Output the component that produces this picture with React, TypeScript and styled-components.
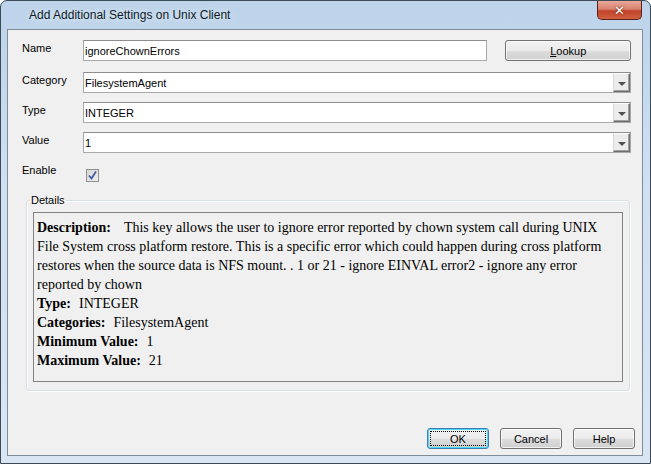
import { createGlobalStyle } from "styled-components";
import styled from "styled-components";

const Global = createGlobalStyle`
  html, body {
    margin: 0;
    padding: 0;
    width: 651px;
    height: 464px;
    overflow: hidden;
    background: #fff;
  }
  * { box-sizing: border-box; }
`;

const Window = styled.div`
  width: 651px;
  height: 464px;
  display: flex;
  flex-direction: column;
  border: 1px solid #3c4a58;
  border-radius: 7px 7px 0 0;
  background: linear-gradient(180deg, #bcd3ea 0%, #cfe0f2 40%, #d8e6f4 100%);
  font-family: "Liberation Sans", Arial, sans-serif;
  position: relative;
`;

const TitleBar = styled.div`
  height: 28px;
  display: flex;
  align-items: center;
  padding-left: 28px;
  font-family: "Liberation Sans", Arial, sans-serif;
  font-size: 12px;
  color: #0e1a26;
  text-shadow: 0 0 6px rgba(255, 255, 255, 0.9);
`;

const CloseButton = styled.div`
  position: absolute;
  top: 0;
  right: 8px;
  width: 45px;
  height: 19px;
  border: 1px solid #5b2118;
  border-top: none;
  border-radius: 0 0 5px 5px;
  background: linear-gradient(180deg, #e9a99a 0%, #d8826f 45%, #c0432a 55%, #d0603f 100%);
  display: flex;
  align-items: center;
  justify-content: center;
  color: #fff;
  font-family: "DejaVu Sans", sans-serif;
  font-weight: bold;
  font-size: 13px;
  text-shadow: 0 0 2px #4a120c;
`;

const Client = styled.div`
  flex: 1;
  margin: 0 7px 7px 6px;
  border: 1px solid #7f8d9b;
  background: #f0f0f0;
  display: flex;
  flex-direction: column;
  padding: 10px 11px 6px 14px;
  font-size: 11px;
  color: #000;
`;

const Row = styled.div<{ $mb: number }>`
  display: flex;
  align-items: center;
  height: 21px;
  margin-bottom: ${(p) => p.$mb}px;
`;

const Label = styled.div`
  width: 61px;
  flex-shrink: 0;
  padding-bottom: 5px;
  font-size: 11px;
`;

const TextInput = styled.div`
  width: 406px;
  height: 21px;
  border: 1px solid #a9a9a9;
  border-top-color: #8e8e8e;
  background: #fff;
  display: flex;
  align-items: center;
  padding-left: 1px;
  font-size: 11px;
`;

const LookupButton = styled.div`
  margin-left: 18px;
  width: 126px;
  height: 21px;
  border: 1px solid #707070;
  border-radius: 3px;
  background: linear-gradient(180deg, #f2f2f2 0%, #ebebeb 50%, #dddddd 51%, #cfcfcf 100%);
  display: flex;
  align-items: center;
  justify-content: center;
  font-size: 11px;
  box-shadow: inset 0 0 0 1px rgba(255, 255, 255, 0.7);
  u { text-decoration: underline; }
`;

const Combo = styled.div`
  width: 549px;
  height: 21px;
  border: 1px solid #a9a9a9;
  border-top-color: #8e8e8e;
  background: #fff;
  display: flex;
  align-items: center;
  justify-content: space-between;
  padding-left: 1px;
  font-size: 11px;
`;

const ComboArrow = styled.div`
  width: 17px;
  height: 19px;
  background: #ececec;
  border-left: 1px solid #d8d8d8;
  border-top: 1px solid #fff;
  border-right: 1px solid #6e6e6e;
  border-bottom: 1px solid #6e6e6e;
  box-shadow: inset -1px -1px 0 #a0a0a0;
  display: flex;
  align-items: center;
  justify-content: center;

  &::after {
    content: "";
    width: 0;
    height: 0;
    border-left: 4px solid transparent;
    border-right: 4px solid transparent;
    border-top: 4px solid #505050;
    margin-top: 2px;
  }
`;

const CheckBox = styled.div`
  margin-left: 3px;
  margin-top: 6px;
  width: 13px;
  height: 13px;
  border: 1px solid #8e8f8f;
  background: linear-gradient(135deg, #d6d6d6, #efefef);
  display: flex;
  align-items: center;
  justify-content: center;
`;

const Group = styled.fieldset`
  margin: 11px 1px 0 4px;
  padding: 6px 6px 8px 6px;
  border: 1px solid #d5dfe5;
  box-shadow: inset 1px 1px 0 #fff, 1px 1px 0 #fff;
  border-radius: 3px;
  min-width: 0;
`;

const Legend = styled.legend`
  padding: 0 1px;
  margin-left: -3px;
  font-size: 11px;
  color: #000;
`;

const DetailBox = styled.div`
  height: 170px;
  border: 1px solid #828282;
  background: #f0f0f0;
  padding: 5px 3px 0 3px;
  font-family: "Liberation Serif", "Times New Roman", serif;
  font-size: 14px;
  line-height: 19px;
  color: #000;
`;

const Line = styled.p`
  margin: 0;
`;

const Key = styled.b<{ $gap?: number }>`
  font-weight: bold;
  padding-right: ${(p) => p.$gap ?? 8}px;
`;

const Footer = styled.div`
  margin-top: auto;
  display: flex;
  justify-content: flex-end;
  gap: 11px;
  margin-right: -4px;
`;

const DialogButton = styled.div<{ $focus?: boolean }>`
  width: 62px;
  height: 21px;
  border: 1px solid ${(p) => (p.$focus ? "#3c7fb1" : "#707070")};
  border-radius: 3px;
  background: linear-gradient(180deg, #f2f2f2 0%, #ebebeb 50%, #dddddd 51%, #cfcfcf 100%);
  display: flex;
  align-items: center;
  justify-content: center;
  font-size: 11px;
  position: relative;
  box-shadow: ${(p) =>
    p.$focus ? "inset 0 0 0 1px #48d8fb" : "inset 0 0 0 1px rgba(255,255,255,0.7)"};

  &::before {
    content: "";
    display: ${(p) => (p.$focus ? "block" : "none")};
    position: absolute;
    inset: 2px;
    border: 1px dotted #000;
  }
`;

const details = [
  { key: "Type:", value: "INTEGER" },
  { key: "Categories:", value: "FilesystemAgent" },
  { key: "Minimum Value:", value: "1" },
  { key: "Maximum Value:", value: "21" },
];

export default function App() {
  return (
    <>
      <Global />
      <Window>
        <TitleBar>Add Additional Settings on Unix Client</TitleBar>
        <CloseButton>✕</CloseButton>
        <Client>
          <Row $mb={11}>
            <Label>Name</Label>
            <TextInput>ignoreChownErrors</TextInput>
            <LookupButton>
              <span>
                <u>L</u>ookup
              </span>
            </LookupButton>
          </Row>
          <Row $mb={9}>
            <Label>Category</Label>
            <Combo>
              FilesystemAgent
              <ComboArrow />
            </Combo>
          </Row>
          <Row $mb={9}>
            <Label>Type</Label>
            <Combo>
              INTEGER
              <ComboArrow />
            </Combo>
          </Row>
          <Row $mb={9}>
            <Label>Value</Label>
            <Combo>
              1
              <ComboArrow />
            </Combo>
          </Row>
          <Row $mb={0}>
            <Label>Enable</Label>
            <CheckBox>
              <svg width="9" height="9" viewBox="0 0 9 9">
                <path d="M1 4.5 L3.5 7.5 L8 0.5" fill="none" stroke="#4257a5" strokeWidth="1.7" />
              </svg>
            </CheckBox>
          </Row>
          <Group>
            <Legend>Details</Legend>
            <DetailBox>
              <Line>
                <Key $gap={13}>Description:</Key>
                <span>
                  This key allows the user to ignore error reported by chown system call during UNIX
                  File System cross platform restore. This is a specific error which could happen
                  during cross platform restores when the source data is NFS mount. . 1 or 21 - ignore
                  EINVAL error2 - ignore any error reported by chown
                </span>
              </Line>
              {details.map((d) => (
                <Line key={d.key}>
                  <Key>{d.key}</Key>
                  <span>{d.value}</span>
                </Line>
              ))}
            </DetailBox>
          </Group>
          <Footer>
            <DialogButton $focus>OK</DialogButton>
            <DialogButton>Cancel</DialogButton>
            <DialogButton>Help</DialogButton>
          </Footer>
        </Client>
      </Window>
    </>
  );
}
